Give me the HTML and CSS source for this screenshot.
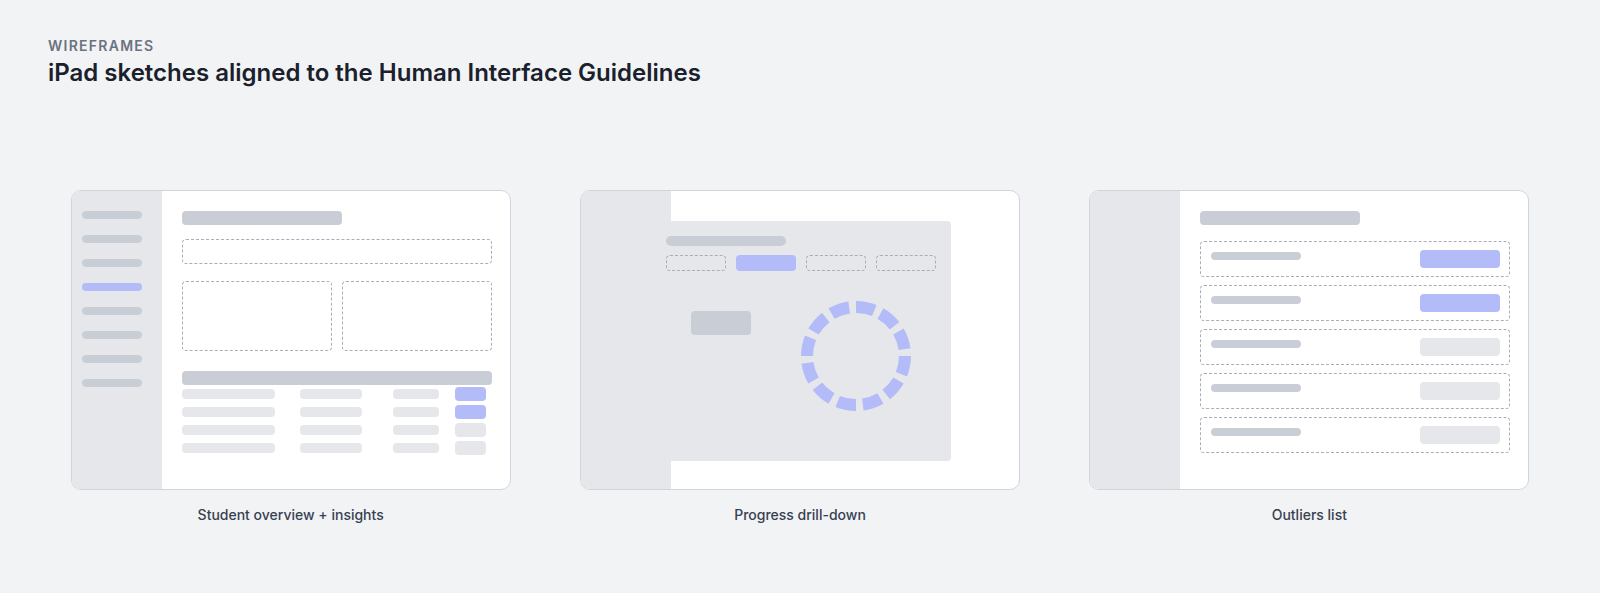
FILE: index.html
```html
<!DOCTYPE html>
<html lang="en">
<head>
  <meta charset="UTF-8">
  <title>Wireframes</title>
  <link rel="stylesheet" href="styles.css">
</head>
<body>

  <header class="page-head">
    <p class="eyebrow">Wireframes</p>
    <h1>iPad sketches aligned to the Human Interface Guidelines</h1>
  </header>

  <div class="boards">
    <!-- Board 1: overview -->
    <figure class="board">
      <div class="ipad">
        <div class="sidebar">
          <span class="nav"></span>
          <span class="nav"></span>
          <span class="nav"></span>
          <span class="nav active"></span>
          <span class="nav"></span>
          <span class="nav"></span>
          <span class="nav"></span>
          <span class="nav"></span>
        </div>
        <div class="main">
          <div class="title-bar"></div>
          <div class="dash strip"></div>
          <div class="pair">
            <div class="dash tile"></div>
            <div class="dash tile"></div>
          </div>
          <div class="table-head"></div>
          <div class="table">
            <div class="trow"><span class="cell c1"></span><span class="cell c2"></span><span class="cell c3"></span><span class="tag on"></span></div>
            <div class="trow"><span class="cell c1"></span><span class="cell c2"></span><span class="cell c3"></span><span class="tag on"></span></div>
            <div class="trow"><span class="cell c1"></span><span class="cell c2"></span><span class="cell c3"></span><span class="tag"></span></div>
            <div class="trow"><span class="cell c1"></span><span class="cell c2"></span><span class="cell c3"></span><span class="tag"></span></div>
          </div>
        </div>
      </div>
      <figcaption>Student overview + insights</figcaption>
    </figure>

    <!-- Board 2: drill-down sheet -->
    <figure class="board">
      <div class="ipad">
        <div class="sidebar"></div>
        <div class="main"></div>
        <div class="sheet">
          <div class="sheet-title"></div>
          <div class="tabs">
            <span class="tab"></span>
            <span class="tab active"></span>
            <span class="tab"></span>
            <span class="tab"></span>
          </div>
          <div class="sheet-body">
            <span class="btn"></span>
            <svg class="ring" width="110" height="110" viewBox="0 0 110 110">
              <circle cx="55" cy="55" r="49" pathLength="312" transform="rotate(-90 55 55)"></circle>
            </svg>
          </div>
        </div>
      </div>
      <figcaption>Progress drill-down</figcaption>
    </figure>

    <!-- Board 3: outliers -->
    <figure class="board">
      <div class="ipad">
        <div class="sidebar"></div>
        <div class="main">
          <div class="title-bar"></div>
          <div class="list">
            <div class="dash item"><span class="line"></span><span class="pill on"></span></div>
            <div class="dash item"><span class="line"></span><span class="pill on"></span></div>
            <div class="dash item"><span class="line"></span><span class="pill"></span></div>
            <div class="dash item"><span class="line"></span><span class="pill"></span></div>
            <div class="dash item"><span class="line"></span><span class="pill"></span></div>
          </div>
        </div>
      </div>
      <figcaption>Outliers list</figcaption>
    </figure>
  </div>

</body>
</html>
```

FILE: styles.css
```css
body {
  margin: 0;
  padding: 38px 48px 0;
  background-color: #f2f3f5;
  font-family: Inter, "Noto Sans", sans-serif;
  color: #1f2937;
}
.eyebrow {
  margin: 0;
  font-size: 14px; line-height: 16px; font-weight: 600;
  letter-spacing: 0.09em; text-transform: uppercase;
  color: #6b7280;
}
h1 {
  margin: 4px 0 0;
  font-size: 24px; line-height: 30px; font-weight: 600;
  color: #1a202c;
}
.boards {
  display: grid; grid-template-columns: repeat(3, 1fr); gap: 24px;
  margin-top: 102px;
}
.board {
  margin: 0; display: flex; flex-direction: column; align-items: center;
}
figcaption {
  margin-top: 16px;
  font-size: 14px; line-height: 18px; font-weight: 500;
  color: #374151;
}
.ipad {
  position: relative; display: flex; overflow: hidden;
  width: 440px; height: 300px; box-sizing: border-box;
  background-color: white; border: 1px solid #d1d5db; border-radius: 10px;
}
.sidebar {
  width: 90px; flex-shrink: 0; box-sizing: border-box;
  padding: 20px 10px; background-color: #e5e7eb;
  display: flex; flex-direction: column; gap: 16px;
}
.nav { display: block; width: 60px; height: 8px; border-radius: 4px; background-color: #c9ced6; }
.nav.active { background-color: #b3bcf9; }
.main {
  flex: 1; padding: 20px 18px 20px 20px;
  display: flex; flex-direction: column;
}
.title-bar { width: 160px; height: 14px; border-radius: 4px; background-color: #c9ced6; }
.dash { border: 1px dashed #a9adb5; border-radius: 4px; box-sizing: border-box; }
.strip { height: 25px; margin-top: 14px; }
.pair { display: grid; grid-template-columns: 1fr 1fr; gap: 10px; margin-top: 17px; }
.tile { height: 70px; }
.table-head { height: 14px; margin-top: 20px; border-radius: 4px; background-color: #c9ced6; }
.table { display: flex; flex-direction: column; gap: 4px; margin-top: 2px; }
.trow {
  display: grid; grid-template-columns: 118px 93px 62px 1fr;
  align-items: center; height: 14px;
}
.cell { display: block; height: 10px; border-radius: 4px; background-color: #e5e7eb; }
.c1 { width: 93px; }
.c2 { width: 62px; }
.c3 { width: 46px; }
.tag { display: block; width: 31px; height: 14px; border-radius: 4px; background-color: #e5e7eb; }
.tag.on { background-color: #b3bcf9; }

/* sheet over board 2 */
.sheet {
  position: absolute; top: 30px; left: 70px;
  width: 300px; height: 240px; box-sizing: border-box;
  padding: 15px; border-radius: 4px; background-color: #e5e7eb;
}
.sheet-title { width: 120px; height: 10px; border-radius: 5px; background-color: #c9ced6; }
.tabs { display: flex; gap: 10px; margin-top: 9px; }
.tab {
  width: 60px; height: 16px; box-sizing: border-box;
  border: 1px dashed #a9adb5; border-radius: 4px;
}
.tab.active { border-color: transparent; background-color: #b3bcf9; }
.sheet-body {
  display: flex; justify-content: space-around; align-items: flex-start;
  margin-top: 30px;
}
.btn { display: block; width: 60px; height: 24px; margin-top: 10px; border-radius: 4px; background-color: #c9ced6; }
.ring circle { fill: none; stroke: #b3bcf9; stroke-width: 12; stroke-dasharray: 19 7; }

.list { display: flex; flex-direction: column; gap: 8px; margin-top: 16px; }
.item {
  height: 36px; padding: 8px 9px 0 10px;
  display: flex; justify-content: space-between; align-items: flex-start;
}
.line { display: block; width: 90px; height: 8px; margin-top: 2px; border-radius: 4px; background-color: #c9ced6; }
.pill { display: block; width: 80px; height: 18px; border-radius: 4px; background-color: #e5e7eb; }
.pill.on { background-color: #b3bcf9; }
```
